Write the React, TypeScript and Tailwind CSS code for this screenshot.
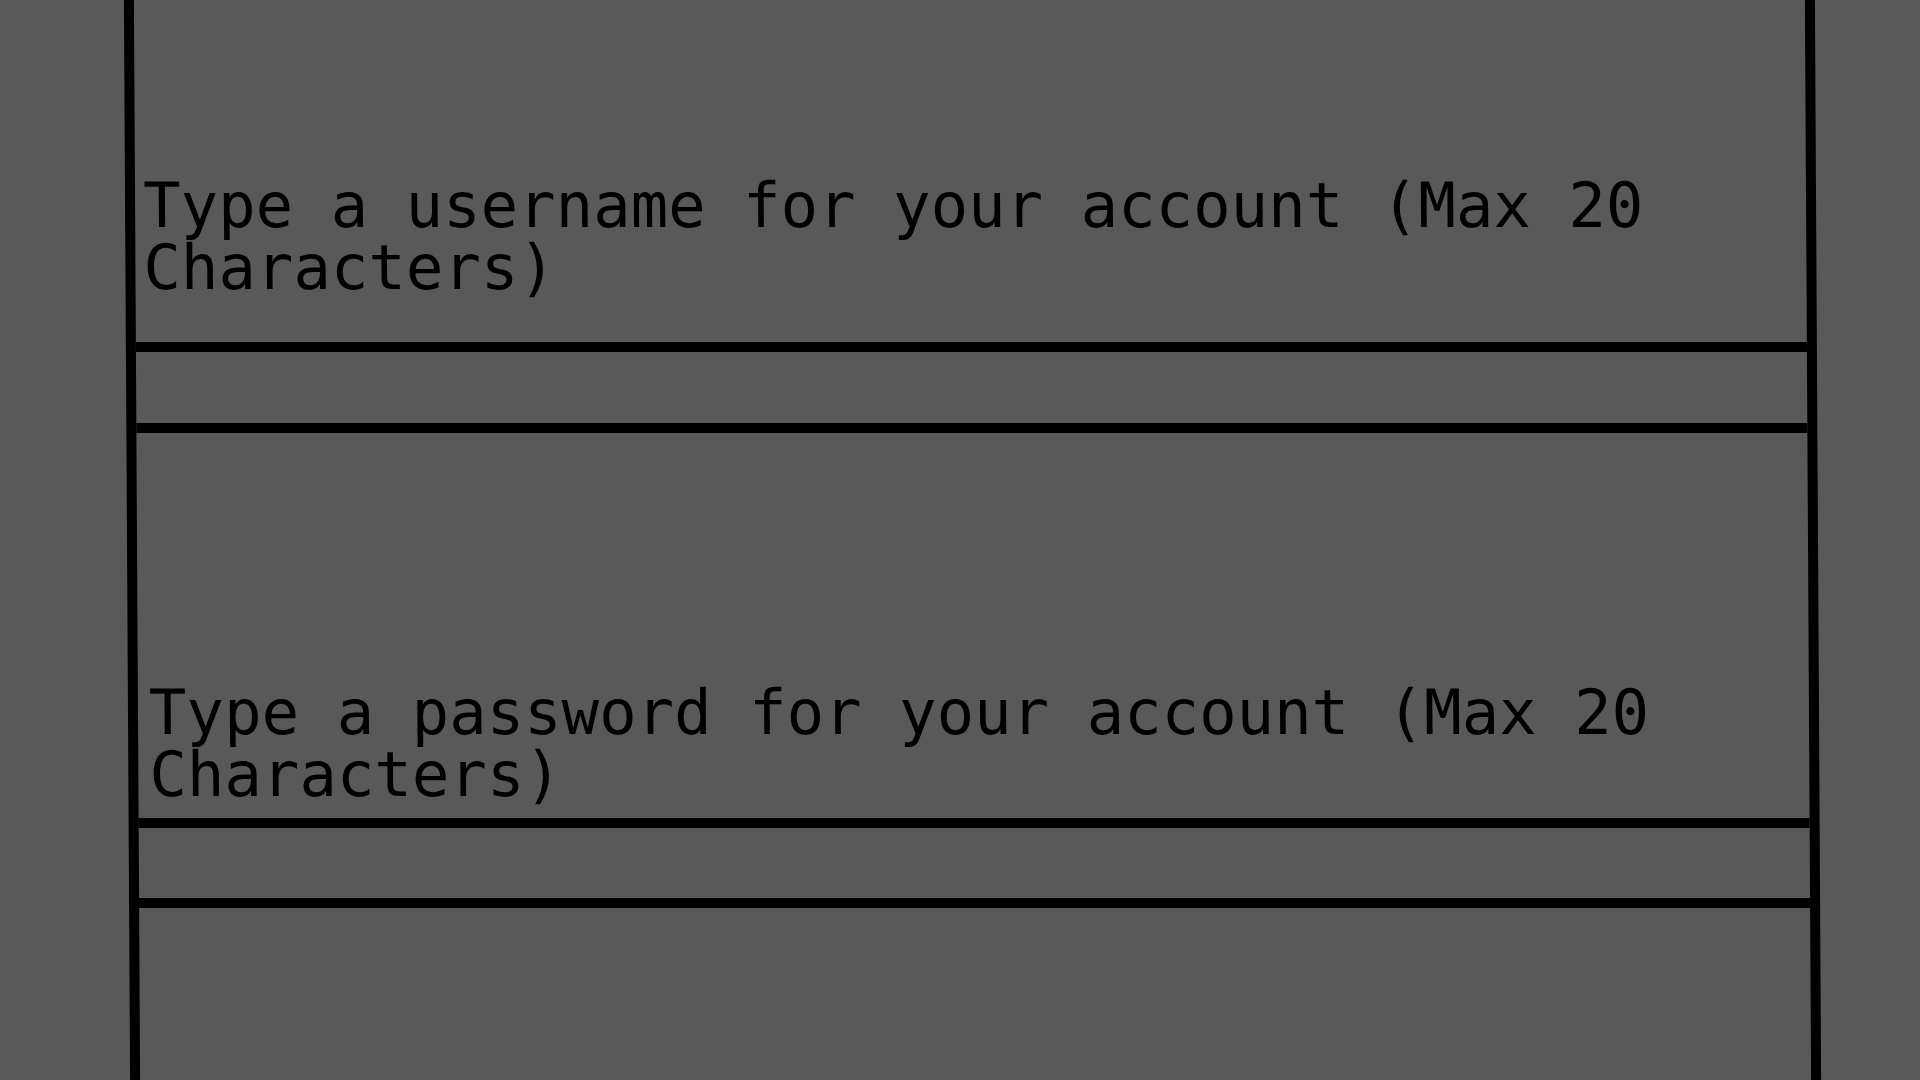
export default function App() {
  const font = { fontFamily: '"DejaVu Sans Mono", "Liberation Mono", monospace' };
  return (
    <div className="w-[1920px] h-[1080px] overflow-hidden bg-[#595959]">
      <div className="ml-[127px] w-[1691px] h-[1080px] border-x-[10px] border-black flex flex-col skew-x-[0.33deg]">
        <div className="h-[342px] shrink-0 flex flex-col justify-end pb-[43px] pl-[8px]">
          <p className="text-[62.3px] leading-[62px] text-black whitespace-pre" style={font}>
            Type a username for your account (Max 20
            <br />
            Characters)
          </p>
        </div>
        <div className="h-[10px] shrink-0 bg-black" />
        <div className="h-[71px] shrink-0" />
        <div className="h-[10px] shrink-0 bg-black" />
        <div className="h-[385px] shrink-0 flex flex-col justify-end pb-[12px] pl-[11px]">
          <p className="text-[62.3px] leading-[62px] text-black whitespace-pre" style={font}>
            Type a password for your account (Max 20
            <br />
            Characters)
          </p>
        </div>
        <div className="h-[10px] shrink-0 bg-black" />
        <div className="h-[70px] shrink-0" />
        <div className="h-[10px] shrink-0 bg-black" />
        <div className="flex-1" />
      </div>
    </div>
  );
}
